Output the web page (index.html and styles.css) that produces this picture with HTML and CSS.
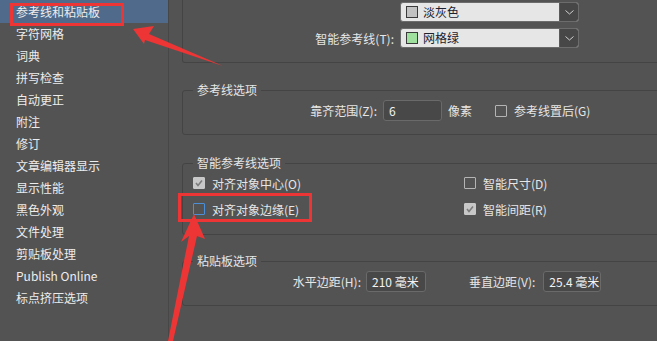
FILE: index.html
```html
<!DOCTYPE html>
<html lang="zh-CN">
<head>
  <meta charset="UTF-8" />
  <title>首选项 - 参考线和粘贴板</title>
  <link rel="stylesheet" href="styles.css">
</head>
<body>
  <div class="window">
    <ul class="nav">
      <li class="active">参考线和粘贴板</li>
      <li>字符网格</li>
      <li>词典</li>
      <li>拼写检查</li>
      <li>自动更正</li>
      <li>附注</li>
      <li>修订</li>
      <li>文章编辑器显示</li>
      <li>显示性能</li>
      <li>黑色外观</li>
      <li>文件处理</li>
      <li>剪贴板处理</li>
      <li>Publish Online</li>
      <li>标点挤压选项</li>
    </ul>

    <div class="content">
      <div class="group group-top">
        <div class="row">
          <span class="label label-wide"></span>
          <div class="select">
            <span class="swatch swatch-gray"></span>
            <span class="select-text">淡灰色</span>
            <span class="select-btn"><svg width="9" height="5" viewBox="0 0 9 5"><polyline points="0.5,0.5 4.5,4 8.5,0.5" fill="none" stroke="#d0d0d0" stroke-width="1"/></svg></span>
          </div>
        </div>
        <div class="row">
          <span class="label label-wide">智能参考线(T):</span>
          <div class="select">
            <span class="swatch swatch-green"></span>
            <span class="select-text">网格绿</span>
            <span class="select-btn"><svg width="9" height="5" viewBox="0 0 9 5"><polyline points="0.5,0.5 4.5,4 8.5,0.5" fill="none" stroke="#d0d0d0" stroke-width="1"/></svg></span>
          </div>
        </div>
      </div>

      <fieldset class="group group-guides">
        <legend>参考线选项</legend>
        <div class="row row-field">
          <span class="label label-snap">靠齐范围(Z):</span>
          <span class="field field-snap">6</span>
          <span class="unit">像素</span>
          <label class="check check-back"><span class="box"></span>参考线置后(G)</label>
        </div>
      </fieldset>

      <fieldset class="group group-smart">
        <legend>智能参考线选项</legend>
        <div class="checks">
          <label class="check"><span class="box checked"><svg width="10" height="10" viewBox="0 0 10 10"><polyline points="2,5 4,7.5 8,2.5" fill="none" stroke="#7c7c7c" stroke-width="1.6"/></svg></span>对齐对象中心(O)</label>
          <label class="check"><span class="box"></span>智能尺寸(D)</label>
          <label class="check"><span class="box focus"></span>对齐对象边缘(E)</label>
          <label class="check"><span class="box checked"><svg width="10" height="10" viewBox="0 0 10 10"><polyline points="2,5 4,7.5 8,2.5" fill="none" stroke="#7c7c7c" stroke-width="1.6"/></svg></span>智能间距(R)</label>
        </div>
      </fieldset>

      <fieldset class="group group-paste">
        <legend>粘贴板选项</legend>
        <div class="row row-field">
          <span class="label label-margin">水平边距(H):</span>
          <span class="field field-h">210 毫米</span>
          <span class="label label-v">垂直边距(V):</span>
          <span class="field field-v">25.4 毫米</span>
        </div>
      </fieldset>
    </div>

    <div class="mark mark-nav"></div>
    <div class="mark mark-edge"></div>
    <svg class="arrows" width="657" height="341" viewBox="0 0 657 341">
      <polygon points="133,29 154,26 149,34 223,66 145,40 144,44" fill="#ee3535"/>
      <polygon points="194,214 205,239 197,236 173,341 168,341 189,236 181,242" fill="#ee3535"/>
    </svg>
  </div>
</body>
</html>
```

FILE: styles.css
```css
body {
  margin: 0;
  background-color: #535353;
  font-family: "Noto Sans CJK SC", "Noto Sans", sans-serif;
  font-size: 12px;
  color: #e6e6e6;
}
.window {
  position: relative;
  display: flex;
  width: 657px;
  height: 341px;
  overflow: hidden;
}
.nav {
  list-style: none;
  margin: 0;
  padding: 0;
  width: 168px;
  flex-shrink: 0;
  border-right: 1px solid #474747;
}
.nav li {
  height: 22px;
  line-height: 22px;
  padding-left: 16px;
  color: #ededed;
  white-space: nowrap;
}
.nav li.active {
  height: 23px;
  line-height: 24px;
  background-color: #4f6a8b;
}
.content {
  flex: 1;
  padding-left: 13px;
  overflow: hidden;
}
.group {
  width: 540px;
  box-sizing: border-box;
  border: 1px solid #444444;
  border-radius: 3px;
  margin: 0;
  min-width: 0;
}
.group-top {
  border-top: none;
  border-radius: 0 0 3px 3px;
  padding: 2px 0 14px;
  display: flex;
  flex-direction: column;
  gap: 6px;
}
.group-guides {
  margin-top: 19px;
  padding: 2px 0 13px;
}
.group-smart {
  margin-top: 20px;
  padding: 1px 0 15px;
}
.group-paste {
  margin-top: 18px;
  padding: 2px 0 13px;
}
legend {
  margin-left: 10px;
  padding: 0 4px;
  line-height: 16px;
  color: #e6e6e6;
}
.row {
  display: flex;
  align-items: center;
  height: 20px;
  white-space: nowrap;
}
.row-field {
  height: 21px;
}
.label {
  text-align: right;
  flex-shrink: 0;
}
.label-wide {
  width: 211px;
  margin-right: 6px;
}
.label-snap {
  width: 194px;
  margin-right: 6px;
}
.label-margin {
  width: 178px;
  margin-right: 5px;
}
.label-v {
  margin-left: 43px;
  margin-right: 8px;
}
.select {
  display: flex;
  align-items: center;
  width: 179px;
  height: 20px;
  box-sizing: border-box;
  border: 1px solid #6c6c6c;
  border-radius: 3px;
  background-color: #e6e6e6;
  overflow: hidden;
}
.swatch {
  width: 10px;
  height: 10px;
  margin-left: 5px;
  border: 1px solid #3a3a3a;
}
.swatch-gray {
  background-color: #c2c2c2;
}
.swatch-green {
  background-color: #9fe09f;
}
.select-text {
  flex: 1;
  margin-left: 5px;
  color: #1c2230;
  line-height: 18px;
}
.select-btn {
  display: flex;
  align-items: center;
  justify-content: center;
  width: 18px;
  height: 100%;
  background-color: #474747;
  border-left: 1px solid #5a5a5a;
}
.field {
  display: block;
  height: 21px;
  line-height: 19px;
  box-sizing: border-box;
  padding-left: 5px;
  border: 1px solid #6a6a6a;
  border-radius: 3px;
  background-color: #484848;
  color: #f2f2f2;
}
.field-snap {
  width: 59px;
}
.field-h {
  width: 60px;
}
.field-v {
  width: 58px;
}
.unit {
  margin-left: 6px;
}
.check {
  display: flex;
  align-items: center;
  gap: 7px;
  height: 20px;
  white-space: nowrap;
}
.check-back {
  margin-left: 23px;
}
.box {
  display: flex;
  align-items: center;
  justify-content: center;
  width: 12px;
  height: 12px;
  box-sizing: border-box;
  border: 1px solid #b4b4b4;
  border-radius: 1px;
}
.box.checked {
  background-color: #c8c8c8;
  border-color: #c8c8c8;
}
.box.focus {
  border-color: #4a8fd8;
}
.checks {
  display: grid;
  grid-template-columns: 271px auto;
  row-gap: 6px;
  padding: 1px 0 0 10px;
}
.mark {
  position: absolute;
  border: 3px solid #ee3535;
  box-sizing: border-box;
}
.mark-nav {
  left: 10px;
  top: 3px;
  width: 114px;
  height: 23px;
}
.mark-edge {
  left: 178px;
  top: 193px;
  width: 134px;
  height: 29px;
}
.arrows {
  position: absolute;
  left: 0;
  top: 0;
  pointer-events: none;
}
```
